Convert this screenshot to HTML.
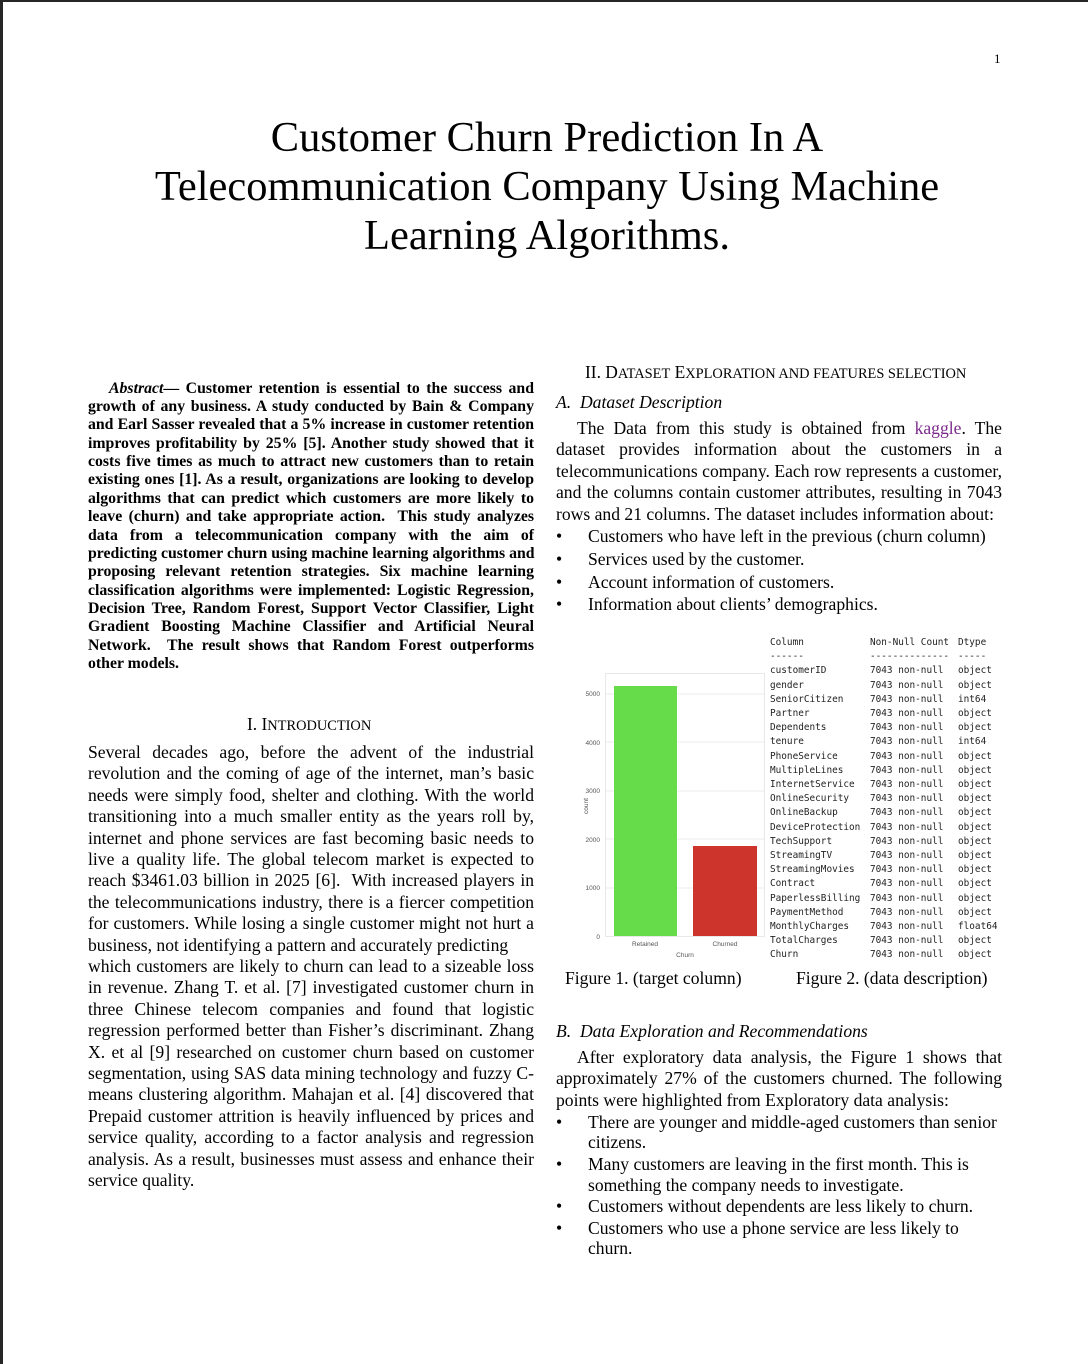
<!DOCTYPE html>
<html><head><meta charset="utf-8"><style>
html,body{margin:0;padding:0;background:#fff;}
body{width:1088px;height:1364px;position:relative;overflow:hidden;font-family:"Liberation Serif",serif;color:#000;}
.frame{position:absolute;left:0;top:0;width:1088px;height:1364px;box-sizing:border-box;border-top:2px solid #262626;border-left:3px solid #262626;}
.l{position:absolute;white-space:nowrap;}
.a{font-size:15.8px;font-weight:bold;line-height:18px;width:446px;left:88px;}
.b{font-size:17.6px;line-height:21px;width:446px;left:88px;}
.r{font-size:17.6px;line-height:21px;width:446px;left:556px;}
.j{text-align:justify;text-align-last:justify;}
.t{position:absolute;left:0;width:1094px;text-align:center;font-size:42.5px;line-height:48px;}
.bul{position:absolute;left:556px;font-size:17.6px;line-height:21px;}
.bt{position:absolute;left:588px;font-size:17.6px;line-height:21px;white-space:nowrap;}
.m{position:absolute;font-family:"DejaVu Sans Mono","Liberation Mono",monospace;font-size:9.4px;line-height:14.2px;color:#222;white-space:nowrap;}
.sc{font-size:14.4px;}
.h{font-size:17.4px;}
</style></head><body>
<div class="frame"></div>
<div class="l" style="left:994px;top:51px;font-size:13px;">1</div>
<div class="t" style="top:114px;">Customer Churn Prediction In A</div>
<div class="t" style="top:163px;">Telecommunication Company Using Machine</div>
<div class="t" style="top:212px;">Learning Algorithms.</div>

<div class="l a j" style="top:380px;left:109px;width:425px;"><i>Abstract</i>— Customer retention is essential to the success and</div>
<div class="l a j" style="top:398px;">growth of any business. A study conducted by Bain &amp; Company</div>
<div class="l a j" style="top:416px;">and Earl Sasser revealed that a 5% increase in customer retention</div>
<div class="l a j" style="top:435px;">improves profitability by 25% [5]. Another study showed that it</div>
<div class="l a j" style="top:453px;">costs five times as much to attract new customers than to retain</div>
<div class="l a j" style="top:471px;">existing ones [1]. As a result, organizations are looking to develop</div>
<div class="l a j" style="top:490px;">algorithms that can predict which customers are more likely to</div>
<div class="l a j" style="top:508px;">leave (churn) and take appropriate action.&nbsp; This study analyzes</div>
<div class="l a j" style="top:527px;">data from a telecommunication company with the aim of</div>
<div class="l a j" style="top:545px;">predicting customer churn using machine learning algorithms and</div>
<div class="l a j" style="top:563px;">proposing relevant retention strategies. Six machine learning</div>
<div class="l a j" style="top:582px;">classification algorithms were implemented: Logistic Regression,</div>
<div class="l a j" style="top:600px;">Decision Tree, Random Forest, Support Vector Classifier, Light</div>
<div class="l a j" style="top:618px;">Gradient Boosting Machine Classifier and Artificial Neural</div>
<div class="l a j" style="top:637px;">Network.&nbsp; The result shows that Random Forest outperforms</div>
<div class="l a" style="top:655px;">other models.</div>

<div class="l h" style="top:714px;left:247px;">I. I<span class="sc">NTRODUCTION</span></div>
<div class="l b j" style="top:742px;">Several decades ago, before the advent of the industrial</div>
<div class="l b j" style="top:763px;">revolution and the coming of age of the internet, man’s basic</div>
<div class="l b j" style="top:785px;">needs were simply food, shelter and clothing. With the world</div>
<div class="l b j" style="top:806px;">transitioning into a much smaller entity as the years roll by,</div>
<div class="l b j" style="top:828px;">internet and phone services are fast becoming basic needs to</div>
<div class="l b j" style="top:849px;">live a quality life. The global telecom market is expected to</div>
<div class="l b j" style="top:870px;">reach $3461.03 billion in 2025 [6].&nbsp; With increased players in</div>
<div class="l b j" style="top:892px;">the telecommunications industry, there is a fiercer competition</div>
<div class="l b j" style="top:913px;">for customers. While losing a single customer might not hurt a</div>
<div class="l b" style="top:935px;">business, not identifying a pattern and accurately predicting</div>
<div class="l b j" style="top:956px;">which customers are likely to churn can lead to a sizeable loss</div>
<div class="l b j" style="top:977px;">in revenue. Zhang T. et al. [7] investigated customer churn in</div>
<div class="l b j" style="top:999px;">three Chinese telecom companies and found that logistic</div>
<div class="l b j" style="top:1020px;">regression performed better than Fisher’s discriminant. Zhang</div>
<div class="l b j" style="top:1042px;">X. et al [9] researched on customer churn based on customer</div>
<div class="l b j" style="top:1063px;">segmentation, using SAS data mining technology and fuzzy C-</div>
<div class="l b j" style="top:1084px;">means clustering algorithm. Mahajan et al. [4] discovered that</div>
<div class="l b j" style="top:1106px;">Prepaid customer attrition is heavily influenced by prices and</div>
<div class="l b j" style="top:1127px;">service quality, according to a factor analysis and regression</div>
<div class="l b j" style="top:1149px;">analysis. As a result, businesses must assess and enhance their</div>
<div class="l b" style="top:1170px;">service quality.</div>

<div class="l h" style="top:362px;left:585px;">II. D<span class="sc">ATASET</span> E<span class="sc">XPLORATION AND FEATURES SELECTION</span></div>
<div class="l" style="top:392px;left:556px;font-size:17.6px;font-style:italic;">A.&nbsp; Dataset Description</div>
<div class="l r j" style="top:418px;left:577px;width:425px;">The Data from this study is obtained from <span style="color:#7b2a8c">kaggle</span>. The</div>
<div class="l r j" style="top:439px;">dataset provides information about the customers in a</div>
<div class="l r j" style="top:461px;">telecommunications company. Each row represents a customer,</div>
<div class="l r j" style="top:482px;">and the columns contain customer attributes, resulting in 7043</div>
<div class="l r" style="top:504px;">rows and 21 columns. The dataset includes information about:</div>
<div class="bul" style="top:526px;">•</div><div class="bt" style="top:526px;">Customers who have left in the previous (churn column)</div>
<div class="bul" style="top:549px;">•</div><div class="bt" style="top:549px;">Services used by the customer.</div>
<div class="bul" style="top:572px;">•</div><div class="bt" style="top:572px;">Account information of customers.</div>
<div class="bul" style="top:594px;">•</div><div class="bt" style="top:594px;">Information about clients’ demographics.</div>

<svg style="position:absolute;left:560px;top:660px;" width="210" height="300">
<rect x="45.5" y="13.5" width="159" height="263" fill="#fff" stroke="#e8e8e8"/>
<g stroke="#ebebeb"><line x1="46" y1="34" x2="204" y2="34"/><line x1="46" y1="82" x2="204" y2="82"/><line x1="46" y1="131" x2="204" y2="131"/><line x1="46" y1="179" x2="204" y2="179"/><line x1="46" y1="228" x2="204" y2="228"/></g>
<rect x="54" y="26" width="63" height="250" fill="#66dc4a"/>
<rect x="133" y="186" width="64" height="90" fill="#cd352c"/>
<g font-family="Liberation Sans,sans-serif" font-size="6.5" fill="#555" text-anchor="end">
<text x="40" y="36">5000</text><text x="40" y="85">4000</text><text x="40" y="133">3000</text><text x="40" y="182">2000</text><text x="40" y="230">1000</text><text x="40" y="279">0</text></g>
<g font-family="Liberation Sans,sans-serif" font-size="6.5" fill="#555" text-anchor="middle">
<text x="85" y="286">Retained</text><text x="165" y="286">Churned</text><text x="125" y="297">Churn</text>
<text x="0" y="0" transform="translate(28,146) rotate(-90)">count</text></g>
</svg>

<div class="m" style="left:770px;top:636px;">Column<br>------<br>customerID<br>gender<br>SeniorCitizen<br>Partner<br>Dependents<br>tenure<br>PhoneService<br>MultipleLines<br>InternetService<br>OnlineSecurity<br>OnlineBackup<br>DeviceProtection<br>TechSupport<br>StreamingTV<br>StreamingMovies<br>Contract<br>PaperlessBilling<br>PaymentMethod<br>MonthlyCharges<br>TotalCharges<br>Churn</div>
<div class="m" style="left:870px;top:636px;">Non-Null Count<br>--------------<br>7043 non-null<br>7043 non-null<br>7043 non-null<br>7043 non-null<br>7043 non-null<br>7043 non-null<br>7043 non-null<br>7043 non-null<br>7043 non-null<br>7043 non-null<br>7043 non-null<br>7043 non-null<br>7043 non-null<br>7043 non-null<br>7043 non-null<br>7043 non-null<br>7043 non-null<br>7043 non-null<br>7043 non-null<br>7043 non-null<br>7043 non-null</div>
<div class="m" style="left:958px;top:636px;">Dtype<br>-----<br>object<br>object<br>int64<br>object<br>object<br>int64<br>object<br>object<br>object<br>object<br>object<br>object<br>object<br>object<br>object<br>object<br>object<br>object<br>float64<br>object<br>object</div>

<div class="l" style="top:968px;left:565px;font-size:17.6px;">Figure 1. (target column)</div>
<div class="l" style="top:968px;left:796px;font-size:17.6px;">Figure 2. (data description)</div>

<div class="l" style="top:1021px;left:556px;font-size:17.6px;font-style:italic;">B.&nbsp; Data Exploration and Recommendations</div>
<div class="l r j" style="top:1047px;left:577px;width:425px;">After exploratory data analysis, the Figure 1 shows that</div>
<div class="l r j" style="top:1068px;">approximately 27% of the customers churned. The following</div>
<div class="l r" style="top:1090px;">points were highlighted from Exploratory data analysis:</div>
<div class="bul" style="top:1112px;">•</div><div class="bt" style="top:1112px;">There are younger and middle-aged customers than senior</div>
<div class="bt" style="top:1132px;">citizens.</div>
<div class="bul" style="top:1154px;">•</div><div class="bt" style="top:1154px;">Many customers are leaving in the first month. This is</div>
<div class="bt" style="top:1175px;">something the company needs to investigate.</div>
<div class="bul" style="top:1196px;">•</div><div class="bt" style="top:1196px;">Customers without dependents are less likely to churn.</div>
<div class="bul" style="top:1218px;">•</div><div class="bt" style="top:1218px;">Customers who use a phone service are less likely to</div>
<div class="bt" style="top:1238px;">churn.</div>
</body></html>
